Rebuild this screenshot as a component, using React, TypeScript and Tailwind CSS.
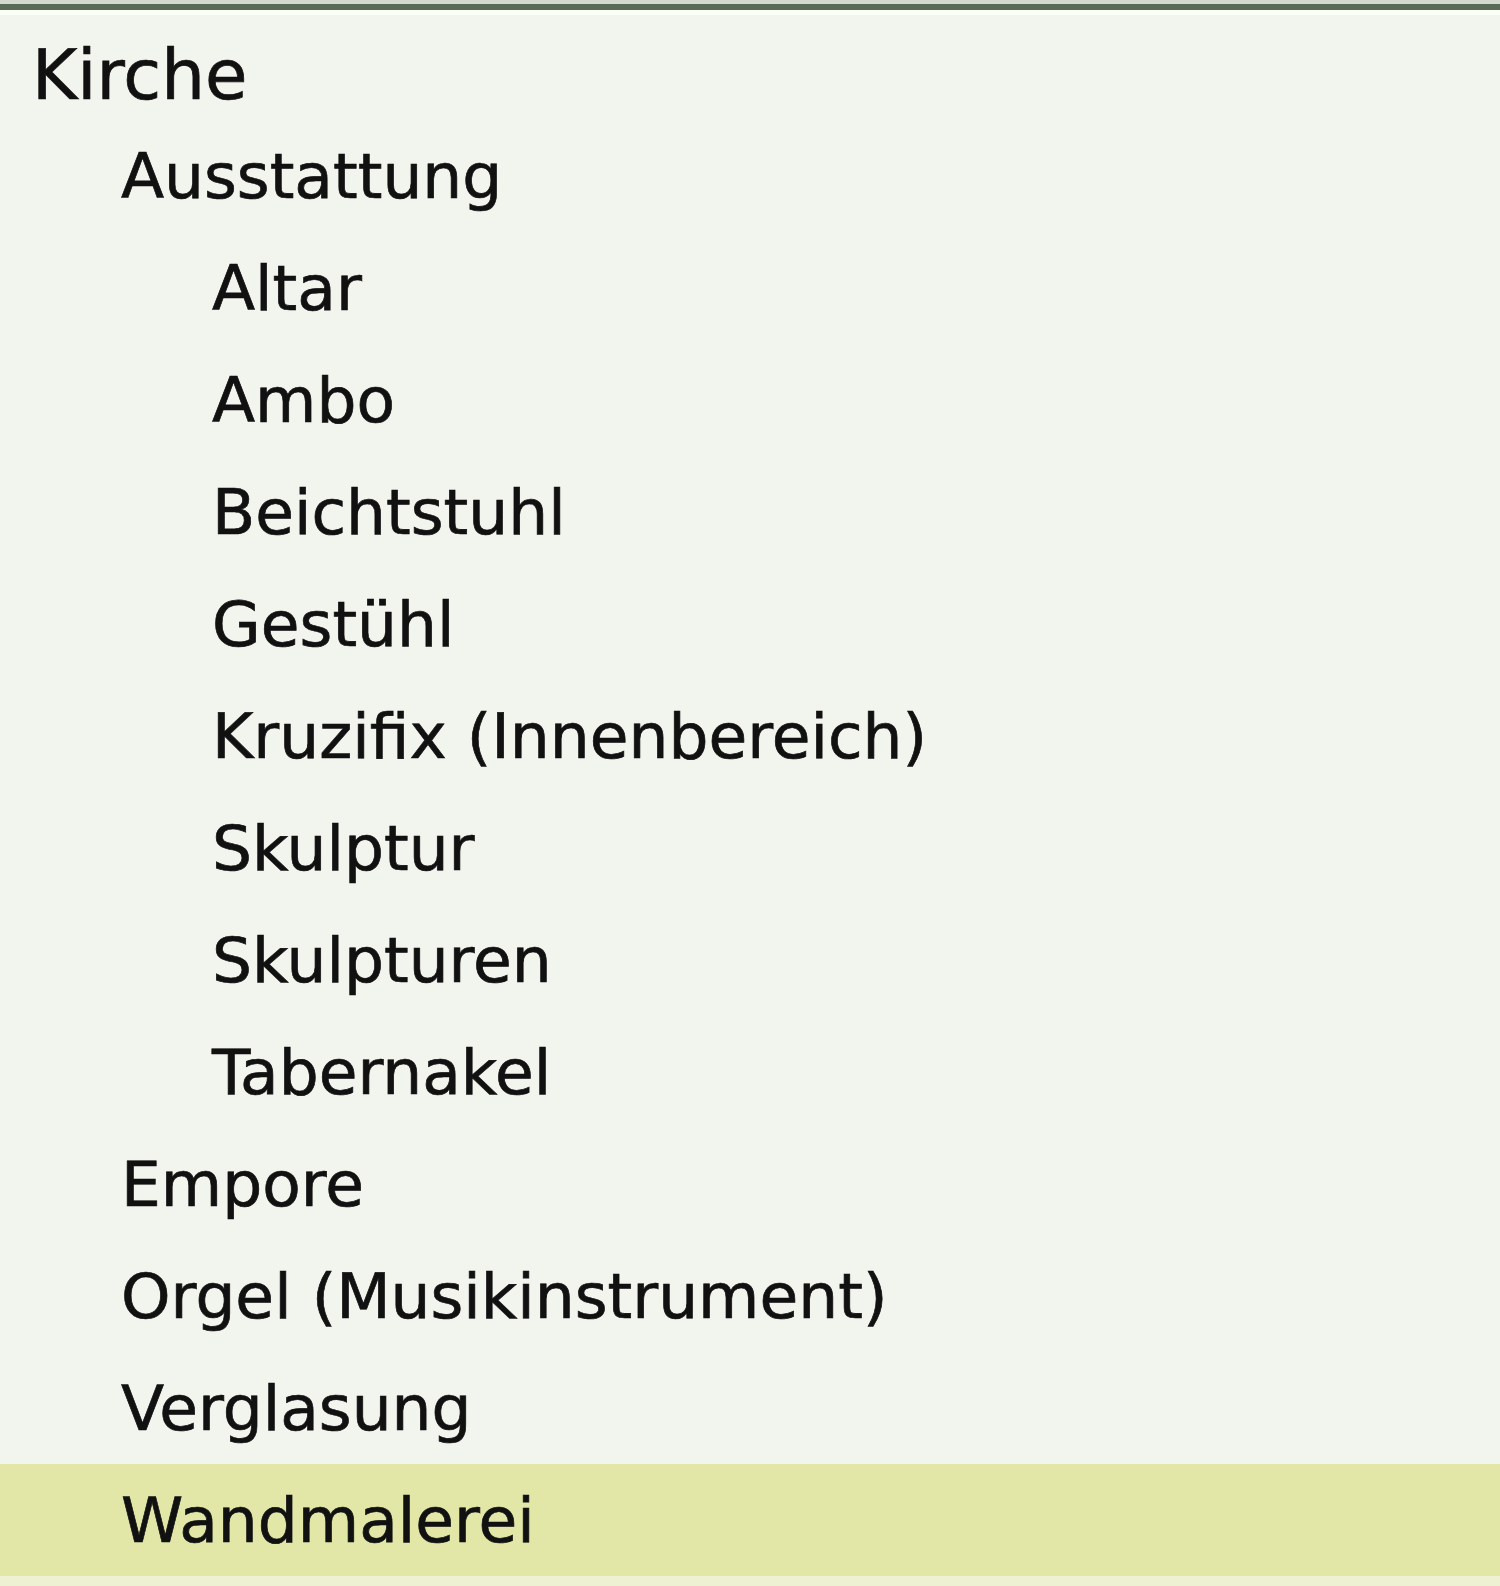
const items: { label: string; level: number; selected?: boolean }[] = [
  { label: "Ausstattung", level: 1 },
  { label: "Altar", level: 2 },
  { label: "Ambo", level: 2 },
  { label: "Beichtstuhl", level: 2 },
  { label: "Gestühl", level: 2 },
  { label: "Kruzifix (Innenbereich)", level: 2 },
  { label: "Skulptur", level: 2 },
  { label: "Skulpturen", level: 2 },
  { label: "Tabernakel", level: 2 },
  { label: "Empore", level: 1 },
  { label: "Orgel (Musikinstrument)", level: 1 },
  { label: "Verglasung", level: 1 },
  { label: "Wandmalerei", level: 1, selected: true },
]

export default function App() {
  return (
    <div className="flex h-[1586px] w-[1500px] flex-col bg-[#f2f4ee] font-['DejaVu_Sans',Verdana,sans-serif] text-[63px] leading-none text-[#111] [-webkit-text-stroke:0.7px_#111]">
      {/* header border */}
      <div className="h-[4px] bg-[#d3dbd0]" />
      <div className="h-[6px] bg-[#5a6b58]" />
      <div className="h-[5px] bg-[#fbfdf7]" />

      <div className="flex h-[105px] items-center pl-[32px] pt-[15px] text-[69px]">Kirche</div>

      {items.map((item) => (
        <div
          key={item.label}
          className={
            "flex h-[112px] shrink-0 items-center " +
            (item.level === 1 ? "pl-[121px] " : "pl-[212px] ") +
            (item.selected ? "bg-[#e2e6a6]" : "")
          }
        >
          {item.label}
        </div>
      ))}

      <div className="flex-1 bg-[#eef1d2]" />
    </div>
  )
}
